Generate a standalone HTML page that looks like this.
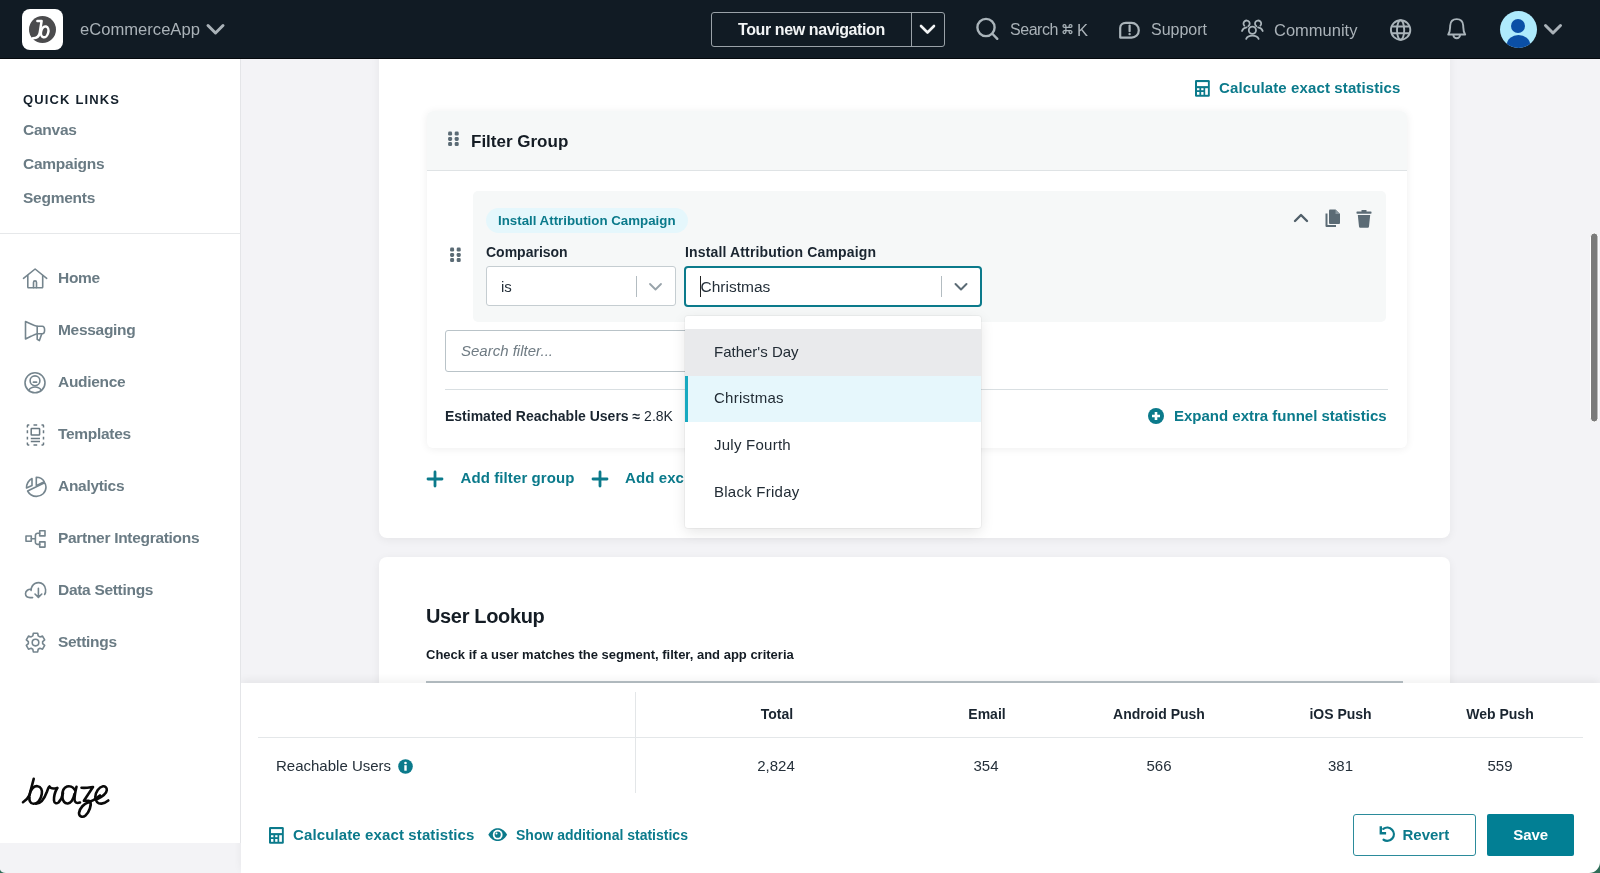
<!DOCTYPE html>
<html><head><meta charset="utf-8">
<style>
*{box-sizing:border-box;margin:0;padding:0}
html,body{width:1600px;height:873px;overflow:hidden;background:#f3f3f6;font-family:"Liberation Sans",sans-serif;position:relative}
.a{position:absolute;white-space:nowrap}
svg{position:absolute;overflow:visible}
#nav{will-change:transform;position:absolute;left:0;top:0;width:1600px;height:59px;background:#111b24;border-bottom:1px solid #05090d;z-index:20}
.nt{color:#aab2b8;font-size:16px;line-height:16px}
#side{will-change:transform;position:absolute;left:0;top:59px;width:241px;height:784px;background:#fff;border-right:1px solid #e4e5e8;z-index:15}
.ql{color:#6a7b84;font-size:15.5px;font-weight:bold;line-height:15.5px;letter-spacing:-0.25px}
.sn{color:#6a7b84;font-size:15.5px;font-weight:bold;line-height:15.5px;letter-spacing:-0.3px}
.card{position:absolute;background:#fff;border-radius:8px;box-shadow:0 2px 10px rgba(0,0,0,0.06)}
.teal{color:#0b7a8b}
.dk{color:#1b2630}
.l14{font-size:14px;line-height:14px;font-weight:bold}
.l15{font-size:15px;line-height:15px}
</style></head>
<body>
<!-- NAV -->
<div id="nav">
  <div class="a" style="left:22px;top:9px;width:41px;height:41px;background:#fff;border-radius:8px"></div>
  <div class="a" style="left:29px;top:16px;width:27px;height:27px;background:#4b4b4d;border-radius:50%"></div>
  <div class="a nt" style="left:80px;top:21.5px;font-size:16.6px;line-height:16.6px">eCommerceApp</div>
  <svg style="left:206px;top:23px" width="19" height="13" viewBox="0 0 19 13"><path d="M2 2.5 L9.5 10 L17 2.5" fill="none" stroke="#aab2b8" stroke-width="3" stroke-linecap="round" stroke-linejoin="round"/></svg>
  <div class="a" style="left:711px;top:12px;width:234px;height:35px;border:1.5px solid #9aa2a8;border-radius:3px"></div>
  <div class="a" style="left:911px;top:13px;width:1.3px;height:33px;background:#9aa2a8"></div>
  <div class="a" style="left:738px;top:21.6px;color:#f2f4f5;font-size:16px;font-weight:bold;line-height:16px;letter-spacing:-0.4px">Tour new navigation</div>
  <svg style="left:919px;top:24px" width="17" height="12" viewBox="0 0 17 12"><path d="M2 2 L8.5 8.5 L15 2" fill="none" stroke="#f2f4f5" stroke-width="2.6" stroke-linecap="round" stroke-linejoin="round"/></svg>
  <div class="a nt" style="left:1010px;top:21.8px;font-size:16px;line-height:16px;letter-spacing:-0.45px">Search</div>
  <div class="a nt" style="left:1077px;top:21.5px;font-size:16.5px;line-height:16.5px">K</div>
  <div class="a nt" style="left:1151px;top:22.4px">Support</div>
  <div class="a nt" style="left:1274px;top:21.5px;font-size:16.5px;line-height:16.5px">Community</div>
  <div class="a" style="left:1500px;top:11px;width:37px;height:37px;background:#aeeafc;border-radius:50%;overflow:hidden">
    <div class="a" style="left:11px;top:8px;width:14px;height:14px;background:#0b4fa6;border-radius:50%"></div>
    <div class="a" style="left:7px;top:24px;width:23px;height:18px;background:#0b4fa6;border-radius:50%"></div>
  </div>
  <svg style="left:1543px;top:23px" width="20" height="13" viewBox="0 0 20 13"><path d="M2.5 2.5 L10 10 L17.5 2.5" fill="none" stroke="#aab2b8" stroke-width="3" stroke-linecap="round" stroke-linejoin="round"/></svg>
</div>

<!-- SIDEBAR -->
<div id="side">
  <div class="a" style="left:23px;top:34px;color:#14202b;font-size:13px;font-weight:bold;letter-spacing:1.15px;line-height:13px">QUICK LINKS</div>
  <div class="a ql" style="left:23px;top:63.4px">Canvas</div>
  <div class="a ql" style="left:23px;top:97.4px">Campaigns</div>
  <div class="a ql" style="left:23px;top:131.3px">Segments</div>
  <div class="a" style="left:0;top:174px;width:240px;height:1px;background:#e6e8ea"></div>
  <div class="a sn" style="left:58px;top:210.9px">Home</div>
  <div class="a sn" style="left:58px;top:262.9px">Messaging</div>
  <div class="a sn" style="left:58px;top:314.9px">Audience</div>
  <div class="a sn" style="left:58px;top:366.9px">Templates</div>
  <div class="a sn" style="left:58px;top:418.9px">Analytics</div>
  <div class="a sn" style="left:58px;top:470.9px">Partner Integrations</div>
  <div class="a sn" style="left:58px;top:522.9px">Data Settings</div>
  <div class="a sn" style="left:58px;top:574.9px">Settings</div>
</div>

<!-- MAIN CARD 1 -->
<div class="card" style="left:379px;top:20px;width:1071px;height:518px;z-index:1"></div>
<!-- MAIN CARD 2 -->
<div class="card" style="left:379px;top:557px;width:1071px;height:400px;z-index:1"></div>


<!-- CARD1 CONTENT -->
<div class="a" style="left:0;top:0;width:1600px;height:873px;z-index:2;will-change:transform">
  <svg style="left:1195px;top:80px" width="15" height="17" viewBox="0 0 15 17"><rect x="0" y="0" width="14.8" height="16.7" rx="1.3" fill="#0b7a8b"/><g fill="#fff"><rect x="2" y="2.1" width="10.9" height="4"/><rect x="2" y="8.2" width="2.4" height="2"/><rect x="6.2" y="8.2" width="2.3" height="2"/><rect x="2" y="12" width="2.4" height="2.8"/><rect x="6.2" y="12" width="2.3" height="2.8"/><rect x="10.2" y="8.2" width="2.7" height="6.6"/></g></svg>
  <div class="a teal l15" style="left:1219px;top:80.3px;font-weight:bold;letter-spacing:0.12px">Calculate exact statistics</div>

  <!-- filter group box -->
  <div class="a" style="left:427px;top:111px;width:980px;height:337px;background:#fff;border-radius:6px;box-shadow:0 1px 8px rgba(0,0,0,0.07)">
    <div class="a" style="left:0;top:0;width:980px;height:60px;background:#f6f8f8;border-radius:6px 6px 0 0;border-bottom:1.5px solid #dfe3e5"></div>
  </div>
  <svg style="left:448px;top:131px" width="12" height="16" viewBox="0 0 12 16"><g fill="#5b6b75"><rect x="0.1" y="0.6" width="4" height="4" rx="1.3"/><rect x="6.7" y="0.6" width="4" height="4" rx="1.3"/><rect x="0.1" y="5.9" width="4" height="4" rx="1.3"/><rect x="6.7" y="5.9" width="4" height="4" rx="1.3"/><rect x="0.1" y="11.1" width="4" height="4" rx="1.3"/><rect x="6.7" y="11.1" width="4" height="4" rx="1.3"/></g></svg>
  <div class="a dk" style="left:471px;top:132.5px;font-size:17px;line-height:17px;font-weight:bold;color:#141c24">Filter Group</div>

  <!-- inner filter -->
  <div class="a" style="left:473px;top:191px;width:913px;height:131px;background:#f6f8f8;border-radius:5px"></div>
  <svg style="left:450px;top:247px" width="12" height="16" viewBox="0 0 12 16"><g fill="#5b6b75"><rect x="0.1" y="0.6" width="4" height="4" rx="1.3"/><rect x="6.7" y="0.6" width="4" height="4" rx="1.3"/><rect x="0.1" y="5.9" width="4" height="4" rx="1.3"/><rect x="6.7" y="5.9" width="4" height="4" rx="1.3"/><rect x="0.1" y="11.1" width="4" height="4" rx="1.3"/><rect x="6.7" y="11.1" width="4" height="4" rx="1.3"/></g></svg>
  <div class="a" style="left:486px;top:208px;width:202px;height:25px;background:#e5f7fc;border-radius:13px"></div>
  <div class="a teal" style="left:498px;top:213.5px;font-size:13.3px;line-height:13.3px;font-weight:bold">Install Attribution Campaign</div>
  <svg style="left:1293px;top:212px" width="16" height="11" viewBox="0 0 16 11"><path d="M2 9 L8 3 L14 9" fill="none" stroke="#505f69" stroke-width="2.4" stroke-linecap="round" stroke-linejoin="round"/></svg>
  <svg style="left:1324px;top:209px" width="17" height="19" viewBox="0 0 17 19"><path d="M1.5 4.5 V17 a1 1 0 0 0 1 1 H12 V16 H3.5 V4.5 Z" fill="#5b6b75"/><path d="M5 1.5 a1 1 0 0 1 1 -1 H11.5 L16 5 V14 a1 1 0 0 1 -1 1 H6 a1 1 0 0 1 -1 -1 Z" fill="#5b6b75"/><path d="M11.5 0.5 V5 H16" fill="#8a98a0"/></svg>
  <svg style="left:1356px;top:210px" width="16" height="18" viewBox="0 0 16 18"><rect x="0.5" y="1.5" width="15" height="2.2" rx="0.6" fill="#5b6b75"/><rect x="5.5" y="0" width="5" height="2" fill="#5b6b75"/><path d="M1.8 5 H14.2 L13 16.5 a1.3 1.3 0 0 1 -1.3 1.2 H4.3 a1.3 1.3 0 0 1 -1.3 -1.2 Z" fill="#5b6b75"/></svg>

  <div class="a l14" style="left:486px;top:244.6px;color:#1a2530">Comparison</div>
  <div class="a l14" style="left:685px;top:244.6px;color:#1a2530;letter-spacing:0.15px">Install Attribution Campaign</div>
  <div class="a" style="left:486px;top:266px;width:190px;height:40px;background:#fff;border:1px solid #c5cdd1;border-radius:3px"></div>
  <div class="a l15" style="left:501px;top:278.7px;color:#25303a">is</div>
  <div class="a" style="left:636px;top:276px;width:1px;height:21px;background:#b3bcc1"></div>
  <svg style="left:648px;top:281px" width="15" height="11" viewBox="0 0 15 11"><path d="M2 3 L7.5 8.5 L13 3" fill="none" stroke="#98a3aa" stroke-width="1.8" stroke-linecap="round" stroke-linejoin="round"/></svg>
  <div class="a" style="left:684px;top:265.5px;width:298px;height:41.5px;background:#fff;border:2px solid #0b7a8b;border-radius:4px"></div>
  <div class="a" style="left:700px;top:276px;width:1.3px;height:21px;background:#222"></div>
  <div class="a l15" style="left:700.5px;top:278.8px;color:#25303a;font-size:15.5px;line-height:15.5px">Christmas</div>
  <div class="a" style="left:941px;top:276px;width:1px;height:21px;background:#b3bcc1"></div>
  <svg style="left:953px;top:281px" width="16" height="11" viewBox="0 0 16 11"><path d="M2.5 3 L8 8.5 L13.5 3" fill="none" stroke="#5b6b75" stroke-width="2" stroke-linecap="round" stroke-linejoin="round"/></svg>

  <!-- search filter -->
  <div class="a" style="left:445px;top:330px;width:260px;height:42px;background:#fff;border:1px solid #b9c3c8;border-radius:3px"></div>
  <div class="a l15" style="left:461px;top:343.3px;color:#6f7b83;font-style:italic">Search filter...</div>
  <div class="a" style="left:445px;top:389px;width:943px;height:1px;background:#d9dfe2"></div>
  <div class="a l14" style="left:445px;top:409px;color:#1a2530">Estimated Reachable Users &#8776; <span style="font-weight:normal">2.8K</span></div>
  <svg style="left:1148px;top:408px" width="16" height="16" viewBox="0 0 16 16"><circle cx="8" cy="8" r="8" fill="#0b7a8b"/><path d="M8 4 V12 M4 8 H12" stroke="#fff" stroke-width="2.6"/></svg>
  <div class="a teal l15" style="left:1174px;top:407.6px;font-weight:bold">Expand extra funnel statistics</div>

  <svg style="left:427px;top:471px" width="16" height="16" viewBox="0 0 16 16"><path d="M8 1 V15 M1 8 H15" stroke="#0b7a8b" stroke-width="2.8" stroke-linecap="round"/></svg>
  <div class="a teal l15" style="left:460.5px;top:470.3px;font-weight:bold;letter-spacing:0.1px">Add filter group</div>
  <svg style="left:592px;top:471px" width="16" height="16" viewBox="0 0 16 16"><path d="M8 1 V15 M1 8 H15" stroke="#0b7a8b" stroke-width="2.8" stroke-linecap="round"/></svg>
  <div class="a teal l15" style="left:625px;top:470.3px;font-weight:bold;letter-spacing:0.1px">Add exclusion group</div>
</div>

<!-- DROPDOWN -->
<div class="a" style="left:685px;top:316px;width:296px;height:212px;background:#fff;border-radius:3px;box-shadow:0 0 0 1px rgba(0,0,0,0.04),0 4px 14px rgba(0,0,0,0.1);z-index:6;overflow:hidden;will-change:transform">
  <div class="a" style="left:0;top:13px;width:296px;height:46.5px;background:#e9eaec"></div>
  <div class="a" style="left:0;top:59.5px;width:296px;height:46.5px;background:#e6f7fc;border-left:3px solid #17a9c0"></div>
  <div class="a l15" style="left:29px;top:27.7px;color:#222c35">Father's Day</div>
  <div class="a l15" style="left:29px;top:74.3px;color:#222c35;letter-spacing:0.25px">Christmas</div>
  <div class="a l15" style="left:29px;top:121px;color:#222c35;letter-spacing:0.25px">July Fourth</div>
  <div class="a l15" style="left:29px;top:167.6px;color:#222c35;letter-spacing:0.25px">Black Friday</div>
</div>

<!-- CARD2 CONTENT -->
<div class="a" style="left:0;top:0;width:1600px;height:873px;z-index:3;will-change:transform">
  <div class="a" style="left:426px;top:606.2px;font-size:20px;line-height:20px;font-weight:bold;color:#141c24;letter-spacing:-0.35px">User Lookup</div>
  <div class="a" style="left:426px;top:647.7px;font-size:13px;line-height:13px;font-weight:bold;color:#141c24">Check if a user matches the segment, filter, and app criteria</div>
  <div class="a" style="left:426px;top:681px;width:977px;height:1.5px;background:#b7c0c5"></div>
</div>

<!-- BOTTOM PANEL -->
<div class="a" style="left:241px;top:683px;width:1359px;height:190px;background:#fff;box-shadow:0 -3px 8px rgba(0,0,0,0.06);z-index:10">
</div>
<div class="a" style="left:0;top:0;width:1600px;height:873px;z-index:11;will-change:transform">
  <div class="a" style="left:634.5px;top:692px;width:1px;height:101px;background:#e3e6e8"></div>
  <div class="a" style="left:258px;top:737px;width:1325px;height:1px;background:#e4e7e9"></div>
  <div class="a l14" style="left:727px;top:707.4px;width:100px;text-align:center;color:#1a2530">Total</div>
  <div class="a l14" style="left:937px;top:707.4px;width:100px;text-align:center;color:#1a2530">Email</div>
  <div class="a l14" style="left:1109px;top:707.4px;width:100px;text-align:center;color:#1a2530">Android Push</div>
  <div class="a l14" style="left:1290.5px;top:707.4px;width:100px;text-align:center;color:#1a2530">iOS Push</div>
  <div class="a l14" style="left:1450px;top:707.4px;width:100px;text-align:center;color:#1a2530">Web Push</div>
  <div class="a l15" style="left:276px;top:757.8px;color:#25303a">Reachable Users</div>
  <svg style="left:398px;top:758.5px" width="15" height="15" viewBox="0 0 15 15"><circle cx="7.5" cy="7.5" r="7.3" fill="#0b7a8b"/><circle cx="7.5" cy="4" r="1.3" fill="#fff"/><rect x="6.3" y="6.2" width="2.4" height="5.5" fill="#fff"/></svg>
  <div class="a l15" style="left:726px;top:757.8px;width:100px;text-align:center;color:#25303a">2,824</div>
  <div class="a l15" style="left:936px;top:757.8px;width:100px;text-align:center;color:#25303a">354</div>
  <div class="a l15" style="left:1109px;top:757.8px;width:100px;text-align:center;color:#25303a">566</div>
  <div class="a l15" style="left:1290.5px;top:757.8px;width:100px;text-align:center;color:#25303a">381</div>
  <div class="a l15" style="left:1450px;top:757.8px;width:100px;text-align:center;color:#25303a">559</div>

  <svg style="left:269px;top:826.5px" width="15" height="17" viewBox="0 0 15 17"><rect x="0" y="0" width="14.8" height="16.7" rx="1.3" fill="#0b7a8b"/><g fill="#fff"><rect x="2" y="2.1" width="10.9" height="4"/><rect x="2" y="8.2" width="2.4" height="2"/><rect x="6.2" y="8.2" width="2.3" height="2"/><rect x="2" y="12" width="2.4" height="2.8"/><rect x="6.2" y="12" width="2.3" height="2.8"/><rect x="10.2" y="8.2" width="2.7" height="6.6"/></g></svg>
  <div class="a teal l15" style="left:293px;top:826.8px;font-weight:bold;letter-spacing:0.12px">Calculate exact statistics</div>
  <svg style="left:488px;top:828px" width="20" height="14" viewBox="0 0 20 14"><path d="M0.3 6.7 C3 2 6.5 0.3 9.7 0.3 C12.9 0.3 16.4 2 19.1 6.7 C16.4 11.4 12.9 13.1 9.7 13.1 C6.5 13.1 3 11.4 0.3 6.7 Z" fill="#0b7a8b"/><circle cx="9.7" cy="6.7" r="4.9" fill="#fff"/><circle cx="9.7" cy="6.7" r="3.1" fill="#0b7a8b"/><circle cx="8.5" cy="5.4" r="1" fill="#fff"/></svg>
  <div class="a teal l14" style="left:516px;top:827.5px">Show additional statistics</div>

  <div class="a" style="left:1353px;top:814px;width:123px;height:42px;border:1.5px solid #2b8b9b;border-radius:3px"></div>
  <svg style="left:1374px;top:821px" width="26" height="26" viewBox="1374 821 26 26"><path d="M1383.3 828.9 A6.6 6.6 0 1 1 1383.6 839.7" fill="none" stroke="#0b7a8b" stroke-width="2.3" stroke-linecap="round"/><path d="M1380.8 826.2 V833.2 H1386.1" fill="none" stroke="#0b7a8b" stroke-width="2.4" stroke-linejoin="miter"/></svg>
  <div class="a teal l15" style="left:1402.5px;top:827.1px;font-weight:bold">Revert</div>
  <div class="a" style="left:1487px;top:814px;width:87.3px;height:41.8px;background:#027f94;border-radius:2px"></div>
  <div class="a l15" style="left:1487px;top:827px;width:87.3px;text-align:center;font-weight:bold;color:#fff">Save</div>
</div>


<!-- ICON OVERLAY -->
<svg style="left:0;top:0;z-index:30" width="1600" height="873" viewBox="0 0 1600 873">
  <!-- app logo b -->
  <g fill="none" stroke="#fff" stroke-width="2.5" stroke-linecap="round" stroke-linejoin="round">
    <path d="M37.4 21 H41.6 L39.8 32.5 C39.2 36.5 36.8 38.2 33 38.3"/>
    <ellipse cx="44.7" cy="31.9" rx="3.6" ry="5.5" transform="rotate(14 44.7 31.9)"/>
  </g>
  <!-- search -->
  <g fill="none" stroke="#aab4ba" stroke-width="2.4" stroke-linecap="round">
    <circle cx="986" cy="27.5" r="8.6"/>
    <path d="M992.6 34 L997.3 38.8"/>
  </g>
  <!-- cmd -->
  <g fill="none" stroke="#aab4ba" stroke-width="1.25">
    <path d="M1065.9 27.4 H1069.1 V26 A1.45 1.45 0 1 1 1070.55 27.45 H1064.45 A1.45 1.45 0 1 1 1065.9 26 V32.1 A1.45 1.45 0 1 1 1064.45 30.65 H1070.55 A1.45 1.45 0 1 1 1069.1 32.1 V30.65 H1065.9 Z"/>
  </g>
  <!-- support -->
  <g fill="none" stroke="#aab4ba" stroke-width="2.2" stroke-linejoin="round">
    <path d="M1120.2 37.6 V28 C1120.2 25 1122.5 22.9 1125.8 22.9 H1131.5 C1135.6 22.9 1138.8 26 1138.8 30.2 C1138.8 34.4 1135.6 37.6 1131.5 37.6 Z"/>
    <path d="M1129.6 25.6 V31.2" stroke-linecap="round"/>
  </g>
  <circle cx="1129.6" cy="34.1" r="1.2" fill="#aab4ba"/>
  <!-- community -->
  <g fill="none" stroke="#aab4ba" stroke-width="1.8" stroke-linecap="round">
    <circle cx="1252.4" cy="30.2" r="3.6"/>
    <path d="M1246.2 38.8 C1248 34.5 1256.8 34.5 1258.6 38.8"/>
    <path d="M1248.3 26.2 A3.1 3.1 0 1 0 1244.3 25.7"/>
    <path d="M1242 31 C1242.8 28.7 1244.3 27.6 1246.6 27.3"/>
    <path d="M1256.4 26.2 A3.1 3.1 0 1 1 1260.4 25.7"/>
    <path d="M1262.7 31 C1261.9 28.7 1260.4 27.6 1258.1 27.3"/>
  </g>
  <!-- globe -->
  <g fill="none" stroke="#aab4ba" stroke-width="1.9">
    <circle cx="1400.6" cy="30" r="9.7"/>
    <ellipse cx="1400.6" cy="30" rx="3.6" ry="9.7"/>
    <path d="M1391.5 26.5 H1409.7 M1391.5 33.3 H1409.7"/>
  </g>
  <!-- bell -->
  <g fill="none" stroke="#aab4ba" stroke-width="1.9" stroke-linejoin="round">
    <path d="M1448.2 34.5 C1450.5 31.5 1450 28 1450.2 25.5 C1450.5 21 1453.5 19.1 1456.7 19.1 C1459.9 19.1 1462.9 21 1463.2 25.5 C1463.4 28 1462.9 31.5 1465.2 34.5 Z"/>
    <path d="M1453.4 35 A3.3 3.3 0 0 0 1460 35"/>
  </g>

  <!-- sidebar icons -->
  <g fill="none" stroke="#75858e" stroke-width="1.6" stroke-linecap="round" stroke-linejoin="round">
    <!-- home -->
    <path d="M23.5 278.3 L35.1 269 L46.7 278.3"/>
    <path d="M27.8 275.5 V287 A0.8 0.8 0 0 0 28.6 287.8 H41.9 A0.8 0.8 0 0 0 42.7 287 V275.5"/>
    <path d="M33.5 287.6 V282.4 A1.5 1.5 0 0 1 36.5 282.4 V287.6"/>
    <!-- messaging -->
    <path d="M25.5 321.5 V339 L31 336.3 C33 335.3 35.5 334 37.2 333.8 H42.2 C43.6 333.8 44.6 332 44.6 330 C44.6 328 43.6 326.2 42.2 326.2 H37.2 C35.5 326 33 325 31 324 Z"/>
    <path d="M37.2 326.2 V339.3 L39.4 340.6 L41.7 333.9"/>
    <!-- audience -->
    <circle cx="35" cy="382.8" r="10"/>
    <circle cx="35" cy="380.8" r="4.9"/>
    <path d="M33.5 382.2 H36.5" stroke-width="1.8"/>
    <path d="M28.7 390.2 C31.5 386 38.5 386 41.3 390.2"/>
    <!-- partner -->
    <rect x="26" y="536" width="5.3" height="5.2"/>
    <rect x="39.7" y="530.7" width="5.3" height="5.2"/>
    <rect x="39.7" y="541.9" width="5.3" height="5.2"/>
    <path d="M31.3 538.7 H35.3"/>
    <path d="M39.7 533.2 H37.6 A2.2 2.2 0 0 0 35.4 535.4 V542.2 A2.2 2.2 0 0 0 37.6 544.4 H39.7"/>
    <!-- data settings -->
    <path d="M44.6 594.5 C46.3 592 46 587 43.2 584.4 C39.8 581.3 33.3 582.3 31.4 588 L31 590.5"/>
    <path d="M31.1 589.3 C28.7 588.8 25.5 590.8 25.5 593.8 C25.6 596.3 27.7 597.6 30 597.6 H32.6"/>
    <path d="M38.4 588.2 V597.3 M35 594 L38.4 597.4 L41.8 594"/>
    <!-- gear -->
    <path d="M32.80 635.92 L33.34 633.25 L37.66 633.25 L38.20 635.92 L39.93 636.93 L42.52 636.05 L44.68 639.79 L42.63 641.60 L42.63 643.60 L44.68 645.41 L42.52 649.15 L39.93 648.27 L38.20 649.28 L37.66 651.95 L33.34 651.95 L32.80 649.28 L31.07 648.27 L28.48 649.15 L26.32 645.41 L28.37 643.60 L28.37 641.60 L26.32 639.79 L28.48 636.05 L31.07 636.93 Z"/>
    <circle cx="35.5" cy="642.6" r="3.3"/>
    <!-- analytics -->
    <path d="M36.3 477.3 V485.6 L44.2 481.7 C42.8 479 39.8 477.3 36.3 477.3 Z"/>
    <path d="M44.6 482.8 C45.5 484 46 485.5 46 487 C46 492.4 41.6 496.4 36.5 496.4 C32.5 496.4 29.2 494 27.6 491 L44.6 482.8"/>
    <path d="M32 478.5 V485.5 L26.5 488 C26.3 484.5 28.5 480 32 478.5 Z"/>
  </g>
  <!-- templates -->
  <g fill="none" stroke="#6a7982" stroke-width="1.5">
    <path d="M27.4 427.5 V425.7 A0.7 0.7 0 0 1 28.1 425 H29.3 M33.5 425 H37.2 M41.5 425 H42.8 A0.7 0.7 0 0 1 43.5 425.7 V427.5 M43.5 430.3 V433.2 M43.5 436.7 V439.6 M43.5 442.5 V444.3 A0.7 0.7 0 0 1 42.8 445 H41.5 M37.2 445 H33.5 M29.3 445 H28.1 A0.7 0.7 0 0 1 27.4 444.3 V442.5 M27.4 439.6 V436.7 M27.4 433.2 V430.3"/>
    <rect x="31.2" y="428.4" width="8.4" height="6.6" rx="0.6"/>
    <path d="M30.8 438.6 H40 M30.8 441.5 H40"/>
  </g>

  <!-- braze logo -->
  <g fill="none" stroke="#0a0a0a" stroke-width="2.6" stroke-linecap="round" stroke-linejoin="round">
    <path d="M23 802.2 C25.5 800.5 28 798.5 29.5 795 L33.7 778.8"/>
    <path d="M29.5 795 C30.5 788.5 34.5 785.8 37.5 786.2 C41 786.6 42.5 790 41.8 794 C41 799.5 37.5 804 33.5 803.8 C30 803.6 29 800 29.5 797"/>
    <path d="M36 803.8 C41.5 803.5 45 797 46.8 792 C47.8 789 48.5 787.3 49.5 786.5 C50.5 788.5 53.5 789 57.2 788"/>
    <path d="M57.2 788 C55 792 53.8 797 54 800.5 C54.2 803.5 56.5 803.8 58.5 802.5 C61 800 62.5 796 63 793"/>
    <path d="M74.8 790 C73 786.5 69.5 785.8 67 786.5 C64 787.5 62.2 791.5 62.3 796 C62.4 801.5 65 803.8 67.8 803.5 C71 803 73.5 798.5 74.5 794"/>
    <path d="M76.5 786.8 C75.5 791 74.5 796 74.5 799.5 C74.6 802.8 77 803.5 80 802.5"/>
    <path d="M81.5 787.7 C85.5 788.2 89 787.5 93 787 L83.9 800.8 C86 800.5 88 800.3 90.5 801.5 C91.5 805 89.5 812 85.5 815.5 C82.5 818 79 816.5 79 813 C79.5 808 84.5 803.5 88 802.5 C94 800.5 97 798 100 795.5"/>
    <path d="M96 799.8 C101 797.5 106.5 794 106.8 790.2 C107 787.5 105 786 103 786.3 C99 787 95.5 792 95.3 797 C95.2 801.5 98 803.8 101.5 803.6 C104 803.4 106.5 802 108.3 800.5"/>
  </g>

  <!-- corners -->
  <path d="M0 869.5 Q1 872.6 6 873 H0 Z" fill="#2f6d58"/>
  <path d="M1600 862 A11 11 0 0 1 1589 873 H1600 Z" fill="#2f6d58"/>
  <!-- scrollbar -->
  <rect x="1590.5" y="233" width="7.5" height="189" rx="3.7" fill="#7a7a7a" stroke="#fff" stroke-width="1"/>
</svg>
</body></html>
